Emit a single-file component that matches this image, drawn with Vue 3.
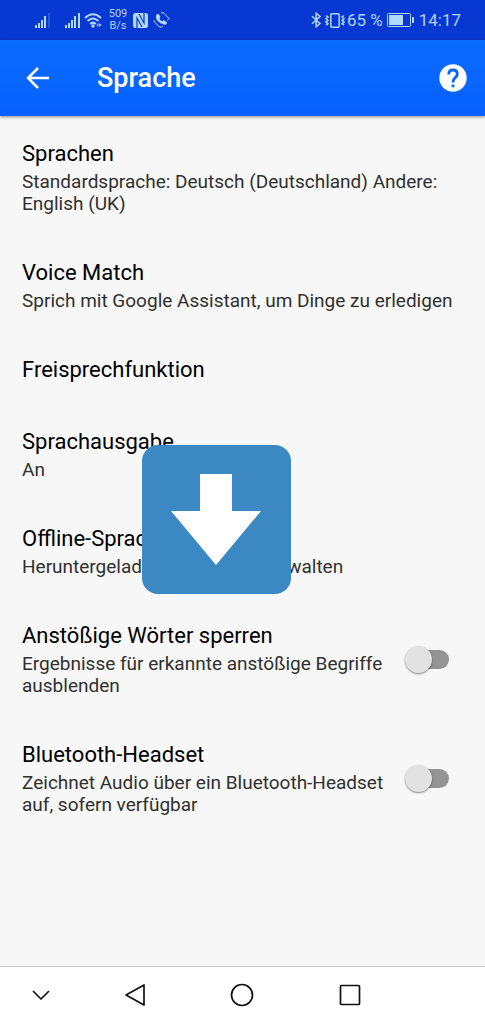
<script setup>
import { ref } from 'vue'

const settings = ref([
  { id: 'languages', title: 'Sprachen', text: 'Standardsprache: Deutsch (Deutschland) Andere: English (UK)' },
  { id: 'voice-match', title: 'Voice Match', text: 'Sprich mit Google Assistant, um Dinge zu erledigen' },
  { id: 'hands-free', title: 'Freisprechfunktion' },
  { id: 'speech-output', title: 'Sprachausgabe', text: 'An' },
  { id: 'offline', title: 'Offline-Spracherkennung', text: 'Heruntergeladene Sprachen verwalten' },
  { id: 'block-words', title: 'Anstößige Wörter sperren', text: 'Ergebnisse für erkannte anstößige Begriffe ausblenden', toggle: true, on: false },
  { id: 'headset', title: 'Bluetooth-Headset', text: 'Zeichnet Audio über ein Bluetooth-Headset auf, sofern verfügbar', toggle: true, on: false }
])
</script>

<template>
  <div class="screen">
    <div class="status">
      <div class="status-left">
        <svg class="signal" width="16" height="15" viewBox="0 0 16 15" aria-hidden="true">
          <path d="M2 15v-3M5 15v-5M8 15V7M11 15V3" />
          <path class="faint" d="M15 15V0" />
        </svg>
        <svg class="signal second" width="16" height="15" viewBox="0 0 16 15" aria-hidden="true">
          <path d="M2 15v-3M5 15v-5M8 15V7M11 15V3M15 15V0" />
        </svg>
        <svg class="wifi" width="18" height="15" viewBox="0 0 18 15" aria-hidden="true">
          <path d="M1 5Q9-2.500 17 5M3.600 8Q9 3 14.400 8M6.200 11Q9 8.300 11.800 11" />
          <circle cx="9" cy="13" r="1.700" />
          <path class="fill" d="M12.500 12l1.700-2v4zM15 10l2.500 2-2.500 2z" />
        </svg>
        <div class="rate"><span>509</span><span>B/s</span></div>
        <svg class="nfc" width="15" height="15" viewBox="0 0 15 15" aria-hidden="true">
          <rect width="15" height="15" rx="2.500" />
          <path d="M4 15V5L9 14M6 1L11 10V0" />
        </svg>
        <svg class="call" width="17" height="16" viewBox="0 0 17 16" aria-hidden="true">
          <path class="fill" d="M3.500 2.500l2-.8 2 3.300-1 1.500q.8 2 2.500 2.700l1.800-.9 3.200 2-.5 2q-2.500 1.200-6-1T3 6.200q-.3-2.200.5-3.700z" />
          <path d="M8 1l2.500-.3L16 6.500l-1.500 2M2 8L1 9.500 6.500 15h2l1.500-1" />
        </svg>
      </div>
      <div class="status-right">
        <svg class="bt" width="11" height="16" viewBox="0 0 11 16" aria-hidden="true">
          <path d="M1 4.300l8 7.200-3.800 3.200V1.300L9 4.500l-8 7.200" />
        </svg>
        <svg class="vibrate" width="20" height="15" viewBox="0 0 20 15" aria-hidden="true">
          <rect x="5.800" y=".8" width="8.400" height="13.400" rx="1" />
          <path d="M1 2.500l2 1.500-2 1.700 2 1.700L1 9l2 1.700-2 1.500M19 2.500L17 4l2 1.700-2 1.700L19 9l-2 1.700 2 1.500" />
        </svg>
        <span>65 %</span>
        <svg class="battery" width="27" height="14" viewBox="0 0 27 14" aria-hidden="true">
          <rect class="shell" x=".5" y=".5" width="23" height="13" rx="1" />
          <rect class="level" x="2" y="2" width="14" height="10" />
          <rect class="level" x="25" y="4" width="2" height="6" />
        </svg>
        <span>14:17</span>
      </div>
    </div>

    <header class="bar">
      <button type="button" aria-label="Zurück">
        <svg width="24" height="22" viewBox="0 0 24 22"><path class="back" d="M12 1L2 11l10 10M2 11h21" /></svg>
      </button>
      <h1>Sprache</h1>
      <button class="help" type="button" aria-label="Hilfe">
        <svg width="28" height="28" viewBox="0 0 28 28">
          <circle cx="14" cy="14" r="13.700" />
          <path d="M9.700 10.500q.1-4.500 4.300-4.500t4.300 4q0 2-2.100 3.700T14 18.500" />
          <rect x="12.600" y="20.500" width="2.800" height="2.800" />
        </svg>
      </button>
    </header>

    <main>
      <ul>
        <li v-for="item in settings" :key="item.id">
          <component :is="item.toggle ? 'label' : 'div'" class="copy" :for="item.toggle ? item.id : undefined">
            <span class="title">{{ item.title }}</span>
            <span v-if="item.text" class="text">{{ item.text }}</span>
          </component>
          <input v-if="item.toggle" :id="item.id" v-model="item.on" class="switch" type="checkbox" role="switch" />
        </li>
      </ul>
      <button class="down" type="button" aria-label="Nach unten">
        <svg width="90" height="92" viewBox="0 0 90 92"><path d="M29 0h32v37h29L45 91 0 37h29z" /></svg>
      </button>
    </main>

    <nav aria-label="Systemnavigation">
      <button type="button" aria-label="Leiste ausblenden"><svg width="26" height="26" viewBox="0 0 26 26"><path d="M5 9l8 8 8-8" /></svg></button>
      <button type="button" aria-label="Zurück"><svg width="26" height="26" viewBox="0 0 26 26"><path d="M21 3v20L3 13z" /></svg></button>
      <button type="button" aria-label="Startbildschirm"><svg width="26" height="26" viewBox="0 0 26 26"><circle cx="13" cy="13" r="10.500" /></svg></button>
      <button type="button" aria-label="Letzte Apps"><svg width="26" height="26" viewBox="0 0 26 26"><rect x="4.500" y="3.500" width="19" height="19" rx="1" /></svg></button>
    </nav>
  </div>
</template>

<style>
body {
  margin: 0;
}
</style>

<style scoped>
.screen {
  display: flex;
  flex-direction: column;
  min-height: 100vh;
  background: #f7f7f7;
  font-family: Roboto, "Liberation Sans", sans-serif;
  color: #000;
}

svg {
  display: block;
  flex: none;
}

button {
  padding: 0;
  border: 0;
  background: none;
}

.status {
  display: flex;
  justify-content: space-between;
  align-items: center;
  height: 40px;
  padding: 0 24px 0 34px;
  background: #0838d2;
  color: #b0d2ff;
  font-size: 17px;
  line-height: 20px;
  white-space: nowrap;
}

.status-left,
.status-right {
  display: flex;
  align-items: center;
}

.status path,
.status rect {
  fill: none;
  stroke: #b0d8ff;
  stroke-width: 2;
}

.status .fill,
.status circle,
.status .level,
.status .nfc rect {
  fill: #b0d8ff;
  stroke: none;
}

.status .faint {
  stroke: #1c5ce4;
}

.second {
  margin-left: 14px;
}

.wifi {
  margin-left: 4px;
}

.rate {
  display: flex;
  flex-direction: column;
  align-items: center;
  width: 18px;
  margin: 0 6px 0 7px;
  font-size: 11px;
  line-height: 12px;
}

.status .nfc path {
  stroke: #0838d2;
  stroke-width: 1.2;
}

.call {
  margin-left: 5px;
}

.status .call path:last-child,
.status .shell {
  stroke-width: 1;
}

.status .bt path,
.status .vibrate path,
.status .vibrate rect {
  stroke-width: 1.5;
}

.vibrate {
  margin: 0 2px 0 3px;
}

.battery {
  margin: 0 5px 0 4px;
}

.bar {
  position: relative;
  display: flex;
  align-items: center;
  height: 76px;
  padding: 0 18px 0 26px;
  background: linear-gradient(#0b6cff, #0660ff);
  box-shadow: 0 1px 3px rgba(0, 0, 0, 0.45);
}

.back {
  fill: none;
  stroke: #fff;
  stroke-width: 2.5;
}

h1 {
  flex: 1;
  margin: 0 0 0 47px;
  color: #fff;
  font-size: 27px;
  font-weight: 500;
  line-height: 32px;
}

.help circle {
  fill: #fff;
}

.help path {
  fill: none;
  stroke: #0a64ff;
  stroke-width: 2.8;
}

.help rect {
  fill: #0a64ff;
}

main {
  position: relative;
  flex: 1;
}

ul {
  margin: 0;
  padding: 2px 0 0;
  list-style: none;
}

li {
  display: flex;
  align-items: center;
  gap: 20px;
  padding: 22px;
}

li:has(.switch) {
  padding-right: 36px;
}

.copy {
  display: flex;
  flex: 1;
  flex-direction: column;
  gap: 3px;
}

.title {
  font-size: 22px;
  line-height: 28px;
}

.text {
  color: #303030;
  font-size: 19px;
  line-height: 22px;
}

.switch {
  position: relative;
  flex: none;
  width: 44px;
  height: 28px;
  margin: 0;
  appearance: none;
}

.switch::before {
  position: absolute;
  top: 4px;
  right: 0;
  width: 38px;
  height: 19px;
  border-radius: 10px;
  background: #949494;
  content: "";
}

.switch::after {
  position: absolute;
  top: 0;
  left: 0;
  width: 27px;
  height: 27px;
  border-radius: 50%;
  background: #e2e2e2;
  box-shadow: 0 1px 2px rgba(0, 0, 0, 0.45);
  content: "";
}

.switch:checked::after {
  right: 0;
  left: auto;
}

.down {
  position: absolute;
  top: 329px;
  left: 142px;
  display: grid;
  justify-content: center;
  align-content: center;
  width: 149px;
  height: 149px;
  padding-right: 2px;
  border-radius: 16px;
  background: #3c88c2;
}

.down path {
  fill: #fff;
}

nav {
  display: grid;
  grid-template-columns: 17% 22% 22% 22%;
  align-items: center;
  height: 55px;
  padding-bottom: 2px;
  border-top: 1px solid #c8caca;
  background: #fff;
}

nav button {
  display: grid;
  justify-content: center;
}

nav path,
nav circle,
nav rect {
  fill: none;
  stroke: #111;
  stroke-width: 1.7;
  stroke-linejoin: round;
}
</style>
